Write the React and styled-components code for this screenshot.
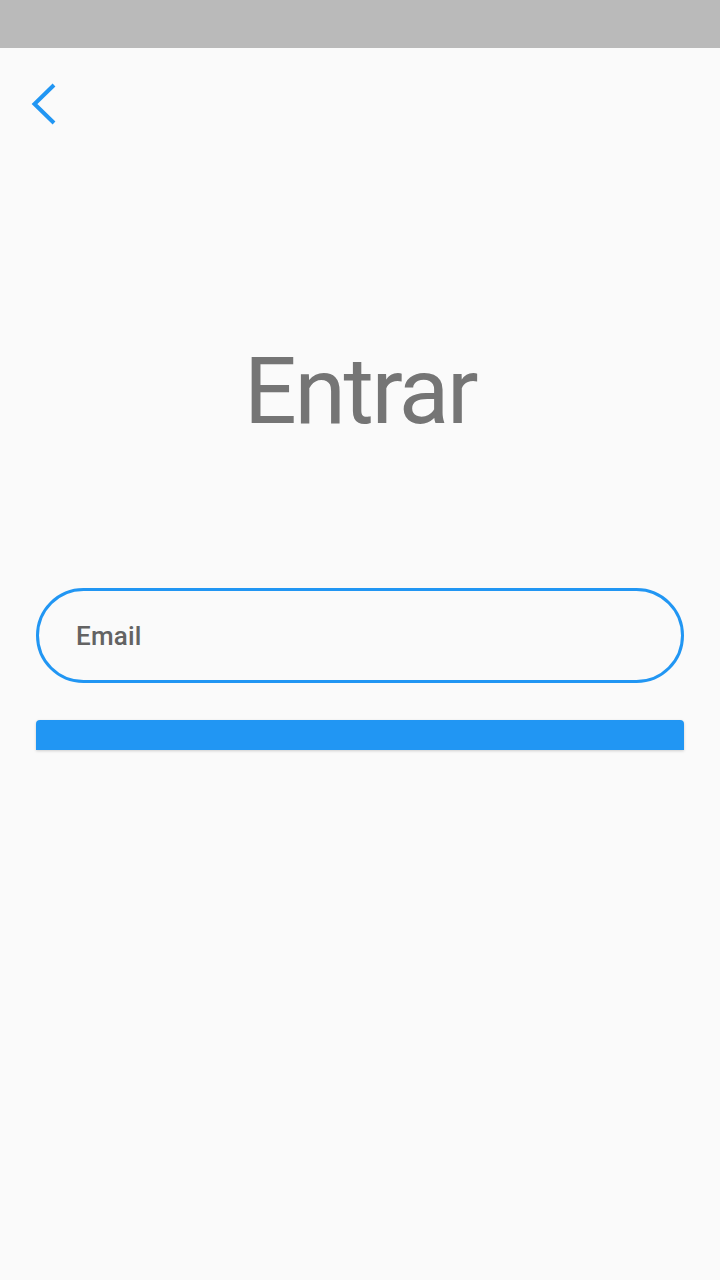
import React from "react";
import styled, { createGlobalStyle } from "styled-components";

const Global = createGlobalStyle`
  html, body { margin: 0; padding: 0; background: #fafafa; }
  body { font-family: Roboto, "Noto Sans", sans-serif; }
  * { box-sizing: border-box; }
`;

const Page = styled.div`
  width: 720px;
  height: 1280px;
  background: #fafafa;
  display: flex;
  flex-direction: column;
  overflow: hidden;
`;

const StatusBar = styled.div`
  height: 48px;
  flex: none;
  background: #bababa;
`;

const TopBar = styled.div`
  height: 112px;
  flex: none;
  display: flex;
  align-items: flex-start;
  padding: 34px 0 0 30px;
`;

const BackButton = styled.button`
  border: none;
  background: transparent;
  padding: 0;
  margin: 0;
  width: 28px;
  height: 44px;
  display: block;
  cursor: pointer;
`;

const Title = styled.h1`
  margin: 185px 0 0 0;
  padding: 0;
  text-align: center;
  font-family: Roboto, sans-serif;
  font-weight: 400;
  font-size: 93px;
  line-height: 93px;
  letter-spacing: -2.4px;
  color: #757575;
`;

const Form = styled.div`
  margin-top: 150px;
  padding: 0 36px;
  display: flex;
  flex-direction: column;
  gap: 37px;
`;

const EmailInput = styled.input`
  height: 95px;
  width: 100%;
  border: 3px solid #2196f3;
  border-radius: 48px;
  background: transparent;
  padding: 0 0 0 37px;
  font-family: Roboto, sans-serif;
  font-size: 26px;
  font-weight: 500;
  letter-spacing: 0.2px;
  color: #636363;
  outline: none;
  &::placeholder {
    color: #636363;
    opacity: 1;
  }
`;

const SubmitButton = styled.button`
  height: 30px;
  width: 100%;
  border: none;
  border-radius: 4px 4px 0 0;
  background: #2196f3;
  box-shadow: 0 1px 3px rgba(0, 0, 0, 0.18);
  padding: 0;
`;

export default function App() {
  return (
    <>
      <Global />
      <Page>
        <StatusBar />
        <TopBar>
          <BackButton aria-label="Voltar">
            <svg width="28" height="44" viewBox="0 0 28 44">
              <polyline
                points="24,3 4.5,22 24,41"
                fill="none"
                stroke="#2196f3"
                strokeWidth="4"
                strokeLinejoin="miter"
              />
            </svg>
          </BackButton>
        </TopBar>
        <Title>Entrar</Title>
        <Form>
          <EmailInput placeholder="Email" />
          <SubmitButton />
        </Form>
      </Page>
    </>
  );
}
